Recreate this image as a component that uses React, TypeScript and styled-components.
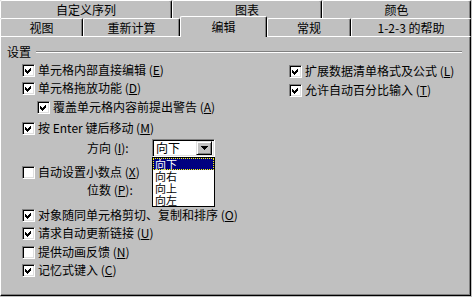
import React from "react";
import styled, { createGlobalStyle } from "styled-components";

const GlobalStyle = createGlobalStyle`
  html, body {
    margin: 0;
    padding: 0;
    background: #c0c0c0;
  }
  body {
    font-family: "Noto Sans CJK SC", "Liberation Sans", sans-serif;
    font-size: 12px;
    color: #000;
  }
`;

const Dialog = styled.div`
  width: 472px;
  height: 297px;
  background: #c0c0c0;
  overflow: hidden;
`;

const TabRow = styled.div`
  display: flex;
  width: 471px;
  height: 18px;
`;

const Tab = styled.div<{ $w: number; $active?: boolean }>`
  width: ${(p) => p.$w}px;
  height: ${(p) => (p.$active ? 21 : 18)}px;
  margin-top: ${(p) => (p.$active ? -2 : 0)}px;
  box-sizing: border-box;
  border-top: 1px solid #fff;
  border-left: 1px solid #fff;
  border-right: 1px solid #000;
  box-shadow: inset -1px 0 #808080;
  border-radius: 2px 2px 0 0;
  background: #c0c0c0;
  display: flex;
  align-items: center;
  justify-content: center;
  line-height: 14px;
  white-space: nowrap;
  position: relative;
  z-index: ${(p) => (p.$active ? 1 : 0)};
`;

const Panel = styled.div`
  width: 471px;
  height: 260px;
  box-sizing: border-box;
  border-top: 1px solid #fff;
  border-left: 1px solid #fff;
  border-right: 1px solid #000;
  border-bottom: 1px solid #000;
  box-shadow: inset -1px -1px #808080;
  padding: 8px 8px 0 6px;
`;

const GroupHeader = styled.div`
  display: flex;
  align-items: center;
  height: 14px;
  line-height: 14px;
`;

const GroupLine = styled.div`
  flex: 1;
  margin-left: 5px;
  border-top: 1px solid #808080;
  border-bottom: 1px solid #fff;
`;

const Columns = styled.div`
  display: grid;
  grid-template-columns: 267px 1fr;
  margin-top: 2px;
  padding-left: 15px;
`;

const Column = styled.div`
  display: flex;
  flex-direction: column;
`;

const Row = styled.div<{ $mt?: number; $indent?: number }>`
  display: flex;
  align-items: center;
  height: 18px;
  margin-top: ${(p) => p.$mt ?? 0}px;
  padding-left: ${(p) => p.$indent ?? 0}px;
  white-space: nowrap;
  line-height: 14px;
`;

const Box = styled.div`
  width: 13px;
  height: 13px;
  box-sizing: border-box;
  flex: none;
  background: #fff;
  border: 1px solid;
  border-color: #808080 #fff #fff #808080;
  box-shadow: inset 1px 1px #000, inset -1px -1px #dfdfdf;
  display: flex;
  align-items: center;
  justify-content: center;
`;

const Label = styled.span`
  margin-left: 3px;
`;

const Key = styled.u`
  text-underline-offset: 1px;
`;

const FieldLabel = styled.span`
  width: 65px;
  margin-left: 65px;
`;

const ComboWrap = styled.div`
  position: relative;
  width: 63px;
  height: 18px;
`;

const Combo = styled.div`
  width: 100%;
  height: 100%;
  box-sizing: border-box;
  border: 1px solid;
  border-color: #808080 #fff #fff #808080;
  box-shadow: inset 1px 1px #000, inset -1px -1px #dfdfdf;
  background: #fff;
  display: flex;
  align-items: center;
  padding: 2px;
`;

const ComboText = styled.span`
  flex: 1;
  padding-left: 1px;
`;

const ComboButton = styled.div`
  width: 16px;
  height: 14px;
  box-sizing: border-box;
  background: #c0c0c0;
  border: 1px solid;
  border-color: #dfdfdf #000 #000 #dfdfdf;
  box-shadow: inset 1px 1px #fff, inset -1px -1px #808080;
  display: flex;
  align-items: center;
  justify-content: center;
`;

const DropList = styled.div`
  position: absolute;
  top: 18px;
  left: 0;
  width: 63px;
  height: 50px;
  box-sizing: border-box;
  border: 1px solid #000;
  background: #fff;
  z-index: 2;
`;

const DropItem = styled.div<{ $selected?: boolean }>`
  height: 12px;
  line-height: 12px;
  font-size: 11px;
  padding-left: 2px;
  background: ${(p) => (p.$selected ? "#000080" : "#fff")};
  color: ${(p) => (p.$selected ? "#fff" : "#000")};
  outline: ${(p) => (p.$selected ? "1px dotted #ffff00" : "none")};
  outline-offset: -1px;
`;

const Check = () => (
  <svg width="7" height="7" viewBox="0 0 7 7" shapeRendering="crispEdges">
    <polygon points="0,2 2,4 6,0 6,3 2,7 0,5" fill="#000" />
  </svg>
);

const Checkbox = ({ checked }: { checked: boolean }) => <Box>{checked && <Check />}</Box>;

type Item = { text: string; hot: string; checked: boolean; mt?: number; indent?: number };

const CheckRow = ({ text, hot, checked, mt, indent }: Item) => (
  <Row $mt={mt} $indent={indent}>
    <Checkbox checked={checked} />
    <Label>
      {text} (<Key>{hot}</Key>)
    </Label>
  </Row>
);

const leftTop: Item[] = [
  { text: "单元格内部直接编辑", hot: "E", checked: true },
  { text: "单元格拖放功能", hot: "D", checked: true },
  { text: "覆盖单元格内容前提出警告", hot: "A", checked: true, mt: 1, indent: 15 },
  { text: "按 Enter 键后移动", hot: "M", checked: true, mt: 3 },
];

const leftBottom: Item[] = [
  { text: "对象随同单元格剪切、复制和排序", hot: "O", checked: true, mt: 7 },
  { text: "请求自动更新链接", hot: "U", checked: true },
  { text: "提供动画反馈", hot: "N", checked: false, mt: 1 },
  { text: "记忆式键入", hot: "C", checked: true },
];

const right: Item[] = [
  { text: "扩展数据清单格式及公式", hot: "L", checked: true, mt: 1 },
  { text: "允许自动百分比输入", hot: "T", checked: true, mt: 1 },
];

const App = () => {
  return (
    <Dialog>
      <GlobalStyle />
      <TabRow>
        <Tab $w={172}>自定义序列</Tab>
        <Tab $w={150}>图表</Tab>
        <Tab $w={149}>颜色</Tab>
      </TabRow>
      <TabRow>
        <Tab $w={83}>视图</Tab>
        <Tab $w={97}>重新计算</Tab>
        <Tab $w={87} $active>
          编辑
        </Tab>
        <Tab $w={84}>常规</Tab>
        <Tab $w={120}>1-2-3 的帮助</Tab>
      </TabRow>
      <Panel>
        <GroupHeader>
          设置
          <GroupLine />
        </GroupHeader>
        <Columns>
          <Column>
            {leftTop.map((it) => (
              <CheckRow {...it} key={it.text} />
            ))}
            <Row $mt={2}>
              <FieldLabel>
                方向 (<Key>I</Key>):
              </FieldLabel>
              <ComboWrap>
                <Combo>
                  <ComboText>向下</ComboText>
                  <ComboButton>
                    <svg width="7" height="4" viewBox="0 0 7 4" shapeRendering="crispEdges">
                      <polygon points="0,0 7,0 3.5,4" fill="#000" />
                    </svg>
                  </ComboButton>
                </Combo>
                <DropList>
                  <DropItem $selected>向下</DropItem>
                  <DropItem>向右</DropItem>
                  <DropItem>向上</DropItem>
                  <DropItem>向左</DropItem>
                </DropList>
              </ComboWrap>
            </Row>
            <CheckRow text="自动设置小数点" hot="X" checked={false} mt={6} />
            <Row>
              <FieldLabel>
                位数 (<Key>P</Key>):
              </FieldLabel>
            </Row>
            {leftBottom.map((it) => (
              <CheckRow {...it} key={it.text} />
            ))}
          </Column>
          <Column>
            {right.map((it) => (
              <CheckRow {...it} key={it.text} />
            ))}
          </Column>
        </Columns>
      </Panel>
    </Dialog>
  );
};

export default App;
